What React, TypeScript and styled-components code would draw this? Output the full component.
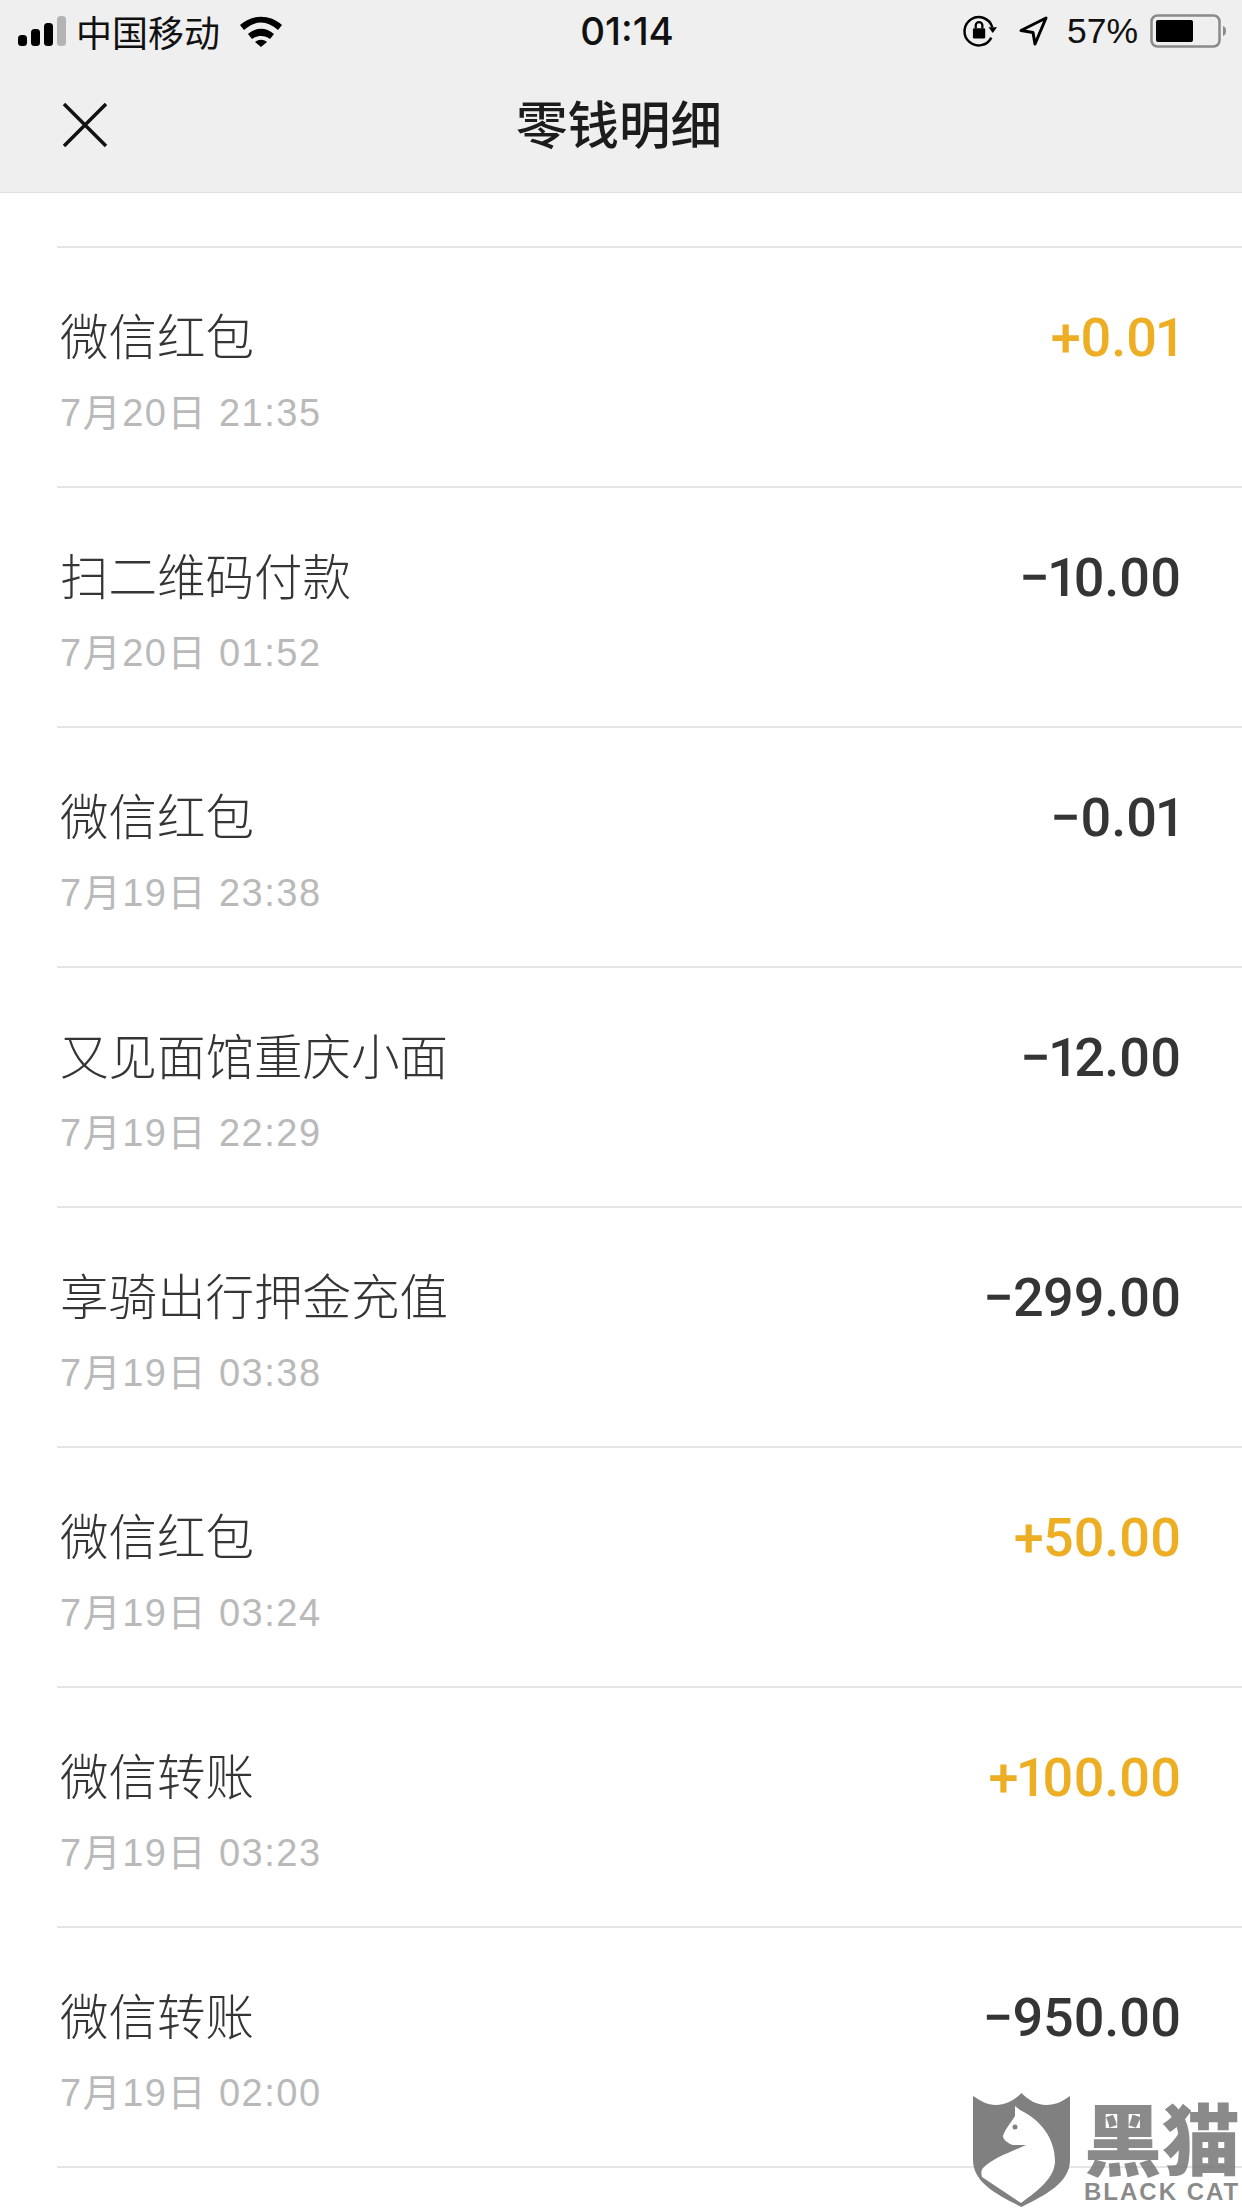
import styled, { createGlobalStyle } from 'styled-components'

const GlobalStyle = createGlobalStyle`
  html, body {
    margin: 0;
    padding: 0;
    background: #ffffff;
  }
  body {
    font-family: "Noto Sans CJK SC", "Liberation Sans", sans-serif;
  }
`

const colors = {
  bar: '#efefef',
  barLine: '#e0e0e0',
  line: '#e5e5e5',
  text: '#353535',
  muted: '#b9b9b9',
  income: '#eeae24',
}

const Page = styled.div`
  position: relative;
  width: 1242px;
  height: 2208px;
  overflow: hidden;
  background: #ffffff;
`

const Header = styled.header`
  background: ${colors.bar};
  border-bottom: 1px solid ${colors.barLine};
`

const StatusBar = styled.div`
  height: 62px;
  padding: 0 16px 0 18px;
  display: grid;
  grid-template-columns: 1fr auto 1fr;
  align-items: center;
  color: #111111;
`

const StatusLeft = styled.div`
  display: flex;
  align-items: center;
`

const Carrier = styled.span`
  margin-left: 10px;
  font-size: 36px;
  line-height: 44px;
  font-weight: 400;
`

const WifiIcon = styled.svg`
  margin-left: 19px;
  width: 44px;
  height: 32px;
`

const Clock = styled.span`
  font-family: "Inter", "Liberation Sans", sans-serif;
  font-size: 38.5px;
  font-weight: 500;
  line-height: 44px;
  margin-left: 10px;
`

const StatusRight = styled.div`
  display: flex;
  align-items: center;
  justify-content: flex-end;
`

const LocationIcon = styled.svg`
  margin-left: 22px;
  width: 30px;
  height: 32px;
`

const Percent = styled.span`
  margin: 0 12px 0 18px;
  font-family: "Liberation Sans", sans-serif;
  font-size: 35.5px;
  line-height: 44px;
`

const NavBar = styled.nav`
  height: 130px;
  padding: 0 0 4px 62px;
  box-sizing: border-box;
  display: flex;
  align-items: center;
  position: relative;
`

const NavTitle = styled.h1`
  position: absolute;
  left: 0;
  right: 4px;
  margin: 0 0 6px;
  text-align: center;
  font-size: 51.5px;
  line-height: 60px;
  font-weight: 500;
  color: #1c1c1c;
`

const CloseIcon = styled.svg`
  width: 46px;
  height: 46px;
`

const PeekRow = styled.div`
  height: 53px;
  margin-left: 57px;
  border-bottom: 2px solid ${colors.line};
`

const Row = styled.div`
  height: 240px;
  box-sizing: border-box;
  margin-left: 57px;
  padding: 56px 61px 0 3px;
  border-bottom: 2px solid ${colors.line};
  display: flex;
  justify-content: space-between;
  align-items: flex-start;
`

const RowText = styled.div`
  display: flex;
  flex-direction: column;
`

const RowTitle = styled.div`
  font-size: 48.5px;
  line-height: 60px;
  font-weight: 300;
  color: ${colors.text};
`

const RowDate = styled.div`
  margin-top: 29px;
  font-family: "Liberation Sans", "Noto Sans CJK SC", sans-serif;
  font-size: 38px;
  line-height: 40px;
  letter-spacing: 1.5px;
  color: ${colors.muted};
`

const Amount = styled.div<{ $income: boolean }>`
  margin-top: 4px;
  font-family: "Roboto", "Liberation Sans", sans-serif;
  font-size: 54px;
  line-height: 60px;
  font-weight: 500;
  letter-spacing: -0.6px;
  font-variant-numeric: proportional-nums;
  color: ${(props) => (props.$income ? colors.income : colors.text)};
`

const Watermark = styled.div`
  position: absolute;
  left: 973px;
  top: 2093px;
  display: flex;
  color: rgba(112, 112, 112, 0.82);
`

const WatermarkWords = styled.div`
  margin: 4px 0 0 14px;
  display: flex;
  flex-direction: column;
  align-items: center;
`

const WatermarkName = styled.div`
  font-size: 78px;
  line-height: 78px;
  font-weight: 900;
  white-space: nowrap;
`

const WatermarkLatin = styled.div`
  margin-top: 5px;
  font-family: "Liberation Sans", sans-serif;
  font-size: 24px;
  line-height: 24px;
  font-weight: 700;
  letter-spacing: 2px;
  white-space: nowrap;
`

const rows = [
  { title: '微信红包', date: '7月20日 21:35', amount: '+0.01' },
  { title: '扫二维码付款', date: '7月20日 01:52', amount: '−10.00' },
  { title: '微信红包', date: '7月19日 23:38', amount: '−0.01' },
  { title: '又见面馆重庆小面', date: '7月19日 22:29', amount: '−12.00' },
  { title: '享骑出行押金充值', date: '7月19日 03:38', amount: '−299.00' },
  { title: '微信红包', date: '7月19日 03:24', amount: '+50.00' },
  { title: '微信转账', date: '7月19日 03:23', amount: '+100.00' },
  { title: '微信转账', date: '7月19日 02:00', amount: '−950.00' },
]

const SignalIcon = () => (
  <svg width="48" height="30" viewBox="0 0 48 30">
    <rect x="0" y="19" width="9" height="11" rx="3.5" fill="#000" />
    <rect x="13" y="13" width="9" height="17" rx="3.5" fill="#000" />
    <rect x="26" y="7" width="9" height="23" rx="3.5" fill="#000" />
    <rect x="39" y="0" width="9" height="30" rx="3.5" fill="#b4b4b4" />
  </svg>
)

const LockIcon = () => (
  <svg width="34" height="34" viewBox="0 0 36 36">
    <path d="M30 25a15 15 0 1 1 1-11" fill="none" stroke="#000" strokeWidth="2.6" />
    <path d="M27 14h9l-4.500 6z" fill="#000" />
    <rect x="10.500" y="15" width="13" height="11" rx="1.500" fill="#000" />
    <path d="M13.500 15v-3a3.500 3.500 0 0 1 7 0v3" fill="none" stroke="#000" strokeWidth="2.400" />
  </svg>
)

const BatteryIcon = () => (
  <svg width="76" height="34" viewBox="0 0 76 34">
    <rect x="1.500" y="1.500" width="68" height="31" rx="6" fill="none" stroke="#8a8a8a" strokeWidth="2.500" />
    <rect x="6" y="6" width="37" height="22" rx="2" fill="#000" />
    <path d="M73 12c2 .5 3 2.500 3 5s-1 4.500-3 5z" fill="#8a8a8a" />
  </svg>
)

const App = () => (
  <Page>
    <GlobalStyle />
    <Header>
      <StatusBar>
        <StatusLeft>
          <SignalIcon />
          <Carrier>中国移动</Carrier>
          <WifiIcon viewBox="0 0 44 32">
            <path d="M1 10C13-1 31-1 43 10l-4 5C28 5 16 5 5 15z" fill="#000" />
            <path d="M9 19c8-7 18-7 26 0l-4 5c-5-4-13-4-18 0z" fill="#000" />
            <path d="M16 27c4-3 8-3 12 0l-6 5z" fill="#000" />
          </WifiIcon>
        </StatusLeft>
        <Clock>01:14</Clock>
        <StatusRight>
          <LockIcon />
          <LocationIcon viewBox="0 0 30 32">
            <path d="M2 15.500 27 3 16 29l-2-11.500z" fill="none" stroke="#000" strokeWidth="3" strokeLinejoin="round" />
          </LocationIcon>
          <Percent>57%</Percent>
          <BatteryIcon />
        </StatusRight>
      </StatusBar>
      <NavBar>
        <CloseIcon viewBox="0 0 46 46">
          <path d="M2 2 44 44M44 2 2 44" stroke="#111" strokeWidth="3.500" fill="none" />
        </CloseIcon>
        <NavTitle>零钱明细</NavTitle>
      </NavBar>
    </Header>
    <PeekRow />
    {rows.map((row) => (
      <Row key={row.date}>
        <RowText>
          <RowTitle>{row.title}</RowTitle>
          <RowDate>{row.date}</RowDate>
        </RowText>
        <Amount $income={row.amount.startsWith('+')}>{row.amount}</Amount>
      </Row>
    ))}
    <Watermark>
      <svg width="97" height="115" viewBox="0 0 97 115">
        <path
          d="M0 3C8 8 14 12 23 12 33 12 42 7 48.500 0 55 7 64 12 73 12 83 12 90 8 97 3V67C97 90 72 102 48.500 114 25 102 0 90 0 67Z"
          fill="#808080"
        />
        <path
          d="M42 13 47 17C68 27 82 46 82 68 82 84 66 97 48 110L9 84C8 80 8 78 10 75 20 65 36 60 53 52L40 52C34 50 30 46 30 43 32 36 38 30 42 23Z"
          fill="#ffffff"
        />
        <circle cx="42" cy="34" r="2.500" fill="#808080" />
      </svg>
      <WatermarkWords>
        <WatermarkName>黑猫</WatermarkName>
        <WatermarkLatin>BLACK CAT</WatermarkLatin>
      </WatermarkWords>
    </Watermark>
  </Page>
)

export default App
